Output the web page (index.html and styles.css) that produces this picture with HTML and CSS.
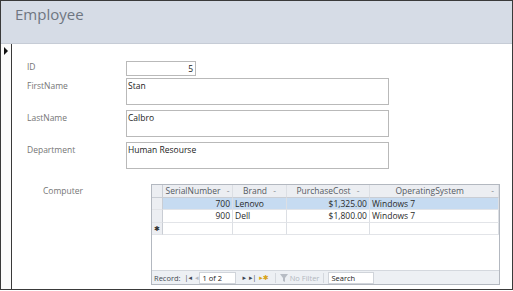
FILE: index.html
```html
<!DOCTYPE html>
<html lang="en">
<head>
  <meta charset="UTF-8">
  <title>Employee</title>
  <link rel="stylesheet" href="styles.css">
</head>
<body>
  <div class="window">
    <div class="form-header">
      <h1>Employee</h1>
    </div>
    <div class="form-body">
      <div class="selector"><span class="arrow"></span></div>
      <div class="detail">
        <div class="fields">
          <label class="lbl lbl-short">ID</label>
          <div class="box box-id">5</div>
          <label class="lbl">FirstName</label>
          <div class="box box-text">Stan</div>
          <label class="lbl">LastName</label>
          <div class="box box-text">Calbro</div>
          <label class="lbl">Department</label>
          <div class="box box-text">Human Resourse</div>
        </div>

        <div class="sub-row">
          <label class="lbl sub-lbl">Computer</label>
          <div class="subform">
            <div class="sheet">
              <div class="cell sel head"></div>
              <div class="cell head">SerialNumber <span class="dd">-</span></div>
              <div class="cell head">Brand <span class="dd">-</span></div>
              <div class="cell head">PurchaseCost <span class="dd">-</span></div>
              <div class="cell head head-wide"><span class="head-txt">OperatingSystem</span><span class="dd">-</span></div>

              <div class="cell sel current"></div>
              <div class="cell num current">700</div>
              <div class="cell current">Lenovo</div>
              <div class="cell num current">$1,325.00</div>
              <div class="cell current">Windows 7</div>

              <div class="cell sel"></div>
              <div class="cell num">900</div>
              <div class="cell">Dell</div>
              <div class="cell num">$1,800.00</div>
              <div class="cell">Windows 7</div>

              <div class="cell sel new">&#10033;</div>
              <div class="cell"></div>
              <div class="cell"></div>
              <div class="cell"></div>
              <div class="cell"></div>
            </div>
            <div class="nav">
              <span class="nav-lbl">Record:</span>
              <span class="nav-btn">|&#9666;</span>
              <span class="nav-btn dim">&#9666;</span>
              <span class="nav-pos">1 of 2</span>
              <span class="nav-btn">&#9656;</span>
              <span class="nav-btn">&#9656;|</span>
              <span class="nav-btn star">&#9656;&#10033;</span>
              <span class="nav-filter">
                <svg width="8" height="8" viewBox="0 0 8 8"><path d="M0 0h8L5 4v4L3 7V4z" fill="#b7bcc4"/></svg>
                No Filter
              </span>
              <span class="nav-search">Search</span>
            </div>
          </div>
        </div>
      </div>
    </div>
  </div>
</body>
</html>
```

FILE: styles.css
```css
body {
  margin: 0;
  font-family: "Open Sans", "DejaVu Sans", sans-serif;
  background-color: #ffffff;
}
.window {
  width: 513px;
  height: 290px;
  box-sizing: border-box;
  border: 1px solid #3a3a3a;
  display: flex;
  flex-direction: column;
  background-color: #ffffff;
}
.form-header {
  height: 42px;
  background-color: #d6dce6;
  border-bottom: 1px solid #c6ccd6;
}
.form-header h1 {
  margin: 0;
  padding: 3px 0 0 14px;
  font-size: 15px;
  font-weight: normal;
  color: #6f7681;
}
.form-body {
  flex: 1;
  display: flex;
}
.selector {
  width: 10px;
  border-right: 1px solid #3a3a3a;
  background-color: #fbfbfb;
}
.arrow {
  display: block;
  margin: 3px 0 0 3px;
  width: 0;
  height: 0;
  border-top: 4px solid transparent;
  border-bottom: 4px solid transparent;
  border-left: 4px solid #111111;
}
.detail {
  flex: 1;
  padding: 17px 0 0 15px;
}
.fields {
  display: grid;
  grid-template-columns: 99px 263px;
  row-gap: 5px;
}
.lbl {
  font-size: 8.5px;
  line-height: 12px;
  padding-top: 2px;
  color: #767676;
}
.lbl-short {
  align-self: center;
  padding-top: 0;
}
.box {
  box-sizing: border-box;
  border: 1px solid #b9b9b9;
  background-color: #ffffff;
  font-size: 8.5px;
  line-height: 12px;
  color: #222222;
  padding: 1px 1px 0 1px;
}
.box-id {
  width: 70px;
  height: 15px;
  text-align: right;
  padding-right: 2px;
  margin-bottom: -4px;
}
.box-text {
  height: 27px;
}
.sub-row {
  display: flex;
  margin-top: 15px;
}
.sub-lbl {
  width: 108px;
  padding-left: 16px;
  padding-top: 1px;
}
.subform {
  width: 349px;
  height: 101px;
  box-sizing: border-box;
  border: 1px solid #b3b8c0;
  display: flex;
  flex-direction: column;
  justify-content: space-between;
  background-color: #ffffff;
}
.sheet {
  display: grid;
  grid-template-columns: 11px 70px 54px 83px 1fr;
  grid-auto-rows: 12.5px;
  font-size: 8.5px;
  line-height: 12px;
  color: #2a2a2a;
}
.cell {
  border-right: 1px solid #dcdfe4;
  border-bottom: 1px solid #e2e4e8;
  padding: 0 2px;
  white-space: nowrap;
  overflow: hidden;
}
.head {
  background-color: #eceef2;
  color: #555a62;
  border-bottom-color: #c9cdd4;
  text-align: center;
}
.head-wide {
  display: flex;
  padding-right: 4px;
}
.head-txt {
  flex: 1;
  text-align: center;
}
.dd {
  color: #8a8f96;
  margin-left: 4px;
}
.sel {
  background-color: #eceef2;
  padding: 0;
  border-right-color: #c9cdd4;
}
.new {
  font-size: 7px;
  text-align: center;
  color: #333333;
}
.current {
  background-color: #c6dbf1;
}
.sel.current {
  background-color: #eceef2;
}
.num {
  text-align: right;
}
.nav {
  height: 13px;
  display: flex;
  align-items: center;
  background-color: #edf0f4;
  border-top: 1px solid #d4d8de;
  font-size: 7.5px;
  color: #444a52;
  padding-left: 2px;
}
.nav-lbl {
  margin-right: 4px;
}
.nav-btn {
  color: #3d4654;
  margin-right: 3px;
  font-size: 7px;
}
.nav-btn.dim {
  color: #b5bac2;
  margin-right: 1px;
}
.nav-btn.star {
  color: #d8a419;
  margin-right: 6px;
}
.nav-pos {
  width: 33px;
  height: 10px;
  line-height: 10px;
  background-color: #ffffff;
  border: 1px solid #d0d4da;
  padding-left: 2px;
  margin-right: 6px;
  color: #222222;
}
.nav-filter {
  display: flex;
  align-items: center;
  gap: 2px;
  color: #b3b8c0;
  padding: 0 4px;
  border-left: 1px solid #d4d8de;
  border-right: 1px solid #d4d8de;
  margin-right: 4px;
}
.nav-search {
  width: 42px;
  height: 10px;
  line-height: 10px;
  background-color: #ffffff;
  border: 1px solid #d0d4da;
  padding-left: 2px;
  color: #222222;
}
```
